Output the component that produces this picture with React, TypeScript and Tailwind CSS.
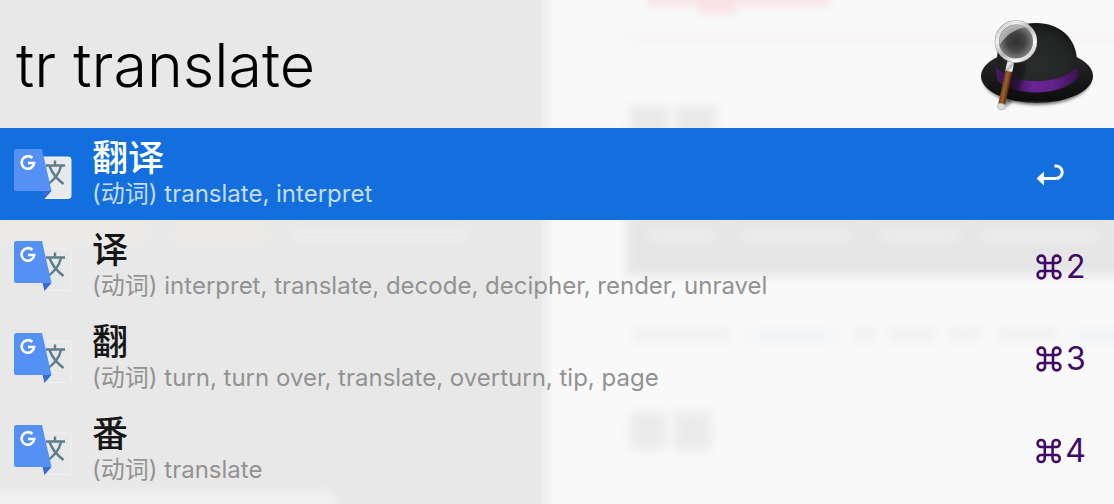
import React from "react";

type Result = { word: string; kind: string; meanings: string; shortcut: string };

const results: Result[] = [
  { word: "翻译", kind: "动词", meanings: "translate, interpret", shortcut: "" },
  { word: "译", kind: "动词", meanings: "interpret, translate, decode, decipher, render, unravel", shortcut: "2" },
  { word: "翻", kind: "动词", meanings: "turn, turn over, translate, overturn, tip, page", shortcut: "3" },
  { word: "番", kind: "动词", meanings: "translate", shortcut: "4" },
];

function TranslateIcon({ active }: { active: boolean }) {
  return (
    <svg viewBox="0 0 58 50" className="h-[50px] w-[58px] shrink-0" aria-hidden="true">
      <path d="M27 8H54.500Q57 8 57 10.500V47Q57 49.500 54.500 49.500H31Z" fill={active ? "#e8eaec" : "#e6e8ea"} stroke="#f0f1f2" strokeWidth="1" />
      <path d="M32 16.500H51M41 11.500V16.500M35.500 17C38 24 43 30 49.500 35M47 17C45.500 24 40 31 33 36" fill="none" stroke="#5f7d88" strokeWidth="2.400" />
      <path d="M28.500 42H37.500L30.500 50Z" fill="#3a6bd0" />
      <path d="M2.500 0H28L37.500 42H2.500Q0 42 0 39.500V2.500Q0 0 2.500 0Z" fill="#5590f5" />
      <path d="M18.400 9A6.300 6.300 0 1 0 20.200 14H14" fill="none" stroke="#fff" strokeWidth="2.600" />
    </svg>
  );
}

function HatIcon() {
  return (
    <svg viewBox="0 0 116 100" className="h-[100px] w-[116px] shrink-0" role="img" aria-label="Alfred">
      <defs>
        <radialGradient id="crown" cx=".5" cy=".6" r=".6">
          <stop offset="0" stopColor="#2b2d2c" />
          <stop offset=".7" stopColor="#232524" />
          <stop offset="1" stopColor="#151716" />
        </radialGradient>
        <linearGradient id="brim" x1="0" y1="0" x2="0" y2="1">
          <stop offset="0" stopColor="#292b2a" />
          <stop offset=".6" stopColor="#181918" />
          <stop offset=".95" stopColor="#0c0d0d" />
          <stop offset="1" stopColor="#333" />
        </linearGradient>
        <linearGradient id="band">
          <stop offset="0" stopColor="#4a1a69" />
          <stop offset=".18" stopColor="#35134b" />
          <stop offset=".45" stopColor="#6a2496" />
          <stop offset=".7" stopColor="#62218b" />
          <stop offset="1" stopColor="#3c1355" />
        </linearGradient>
        <radialGradient id="lens">
          <stop offset="0" stopColor="#303030" />
          <stop offset=".5" stopColor="#444" />
          <stop offset="1" stopColor="#888" />
        </radialGradient>
        <linearGradient id="rim" x1="0" y1="0" x2="1" y2="1">
          <stop offset="0" stopColor="#b8b8b8" />
          <stop offset=".25" stopColor="#f2f2f2" />
          <stop offset=".5" stopColor="#b5b5b5" />
          <stop offset=".75" stopColor="#fafafa" />
          <stop offset="1" stopColor="#aaa" />
        </linearGradient>
        <linearGradient id="wood">
          <stop offset="0" stopColor="#6b3d1b" />
          <stop offset=".45" stopColor="#a0622c" />
          <stop offset="1" stopColor="#53290e" />
        </linearGradient>
        <filter id="soft"><feGaussianBlur stdDeviation="1.500" /></filter>
      </defs>
      <ellipse cx="57" cy="65" rx="54" ry="26" fill="#777" filter="url(#soft)" />
      <ellipse cx="57" cy="62" rx="56" ry="27" fill="url(#brim)" />
      <path d="M17 66V44C18 22 34 9 56 9C80 9 96 24 97 46V66C80 82 35 82 17 66Z" fill="url(#crown)" />
      <path d="M16 53C34 72 80 72 97 53L98 63C82 83 34 83 17 66Z" fill="url(#band)" />
      <path d="M44 48C47 58 40 75 32 88L24 94L31 48Z" fill="#0b0b0b" opacity=".5" filter="url(#soft)" />
      <g transform="rotate(12 35 28)">
        <rect x="31.500" y="48" width="7" height="12" rx="1" fill="url(#rim)" />
        <rect x="31.500" y="58" width="7" height="34" fill="url(#wood)" />
        <rect x="31.500" y="91" width="7" height="6" rx="2" fill="#dcdcdc" stroke="#a5a5a5" strokeWidth=".6" />
      </g>
      <circle cx="36" cy="27.500" r="18.500" fill="url(#lens)" />
      <path d="M18 24C21 11 36 8 47 13C37 14 26 20 19 32Z" fill="#e0e0e0" opacity=".6" />
      <circle cx="36" cy="27.500" r="19" fill="none" stroke="#7b7b7b" strokeWidth="4.600" />
      <circle cx="36" cy="27.500" r="19" fill="none" stroke="url(#rim)" strokeWidth="3.800" />
    </svg>
  );
}

function ReturnIcon() {
  return (
    <svg viewBox="0 0 28 22" className="h-[22px] w-7" role="img" aria-label="Return">
      <path d="M0.500 14.500L8 7.500V21.500Z" fill="#fff" />
      <path d="M7 14.500H20A6.250 6.250 0 0 0 20 2H18.500" fill="none" stroke="#fff" strokeWidth="3" />
    </svg>
  );
}

function CommandIcon() {
  return (
    <svg viewBox="0 0 26 26" className="size-[26px]" role="img" aria-label="Command">
      <path d="M9 9H17V17H9ZM9 9H5.300A3.700 3.700 0 1 1 9 5.300ZM17 9V5.300A3.700 3.700 0 1 1 20.700 9ZM17 17H20.700A3.700 3.700 0 1 1 17 20.700ZM9 17V20.700A3.700 3.700 0 1 1 5.300 17Z" fill="none" stroke="#420866" strokeWidth="2.600" />
    </svg>
  );
}

function Backdrop() {
  return (
    <svg aria-hidden="true" className="absolute inset-0 -z-10 size-full bg-[#f9f9f9]">
      <defs>
        <filter id="haze" x="-50%" y="-50%" width="200%" height="200%" colorInterpolationFilters="sRGB"><feGaussianBlur stdDeviation="5" /></filter>
        <filter id="mist" x="-50%" y="-200%" width="200%" height="500%" colorInterpolationFilters="sRGB"><feGaussianBlur stdDeviation="4" /></filter>
        <linearGradient id="edge">
          <stop offset="0" stopColor="#e8e8e8" />
          <stop offset="1" stopColor="#f9f9f9" />
        </linearGradient>
      </defs>
      <rect width="540" height="100%" fill="#e8e8e8" />
      <rect x="539" width="15" height="100%" fill="url(#edge)" />
      <g filter="url(#haze)">
        <path d="M0 224H150V246H0ZM172 224H268V246H172Z" fill="#eceae7" />
        <path d="M290 226H470V244H290Z" fill="#ebebeb" />
        <path d="M630 106H668V136H630ZM676 106H716V136H676Z" fill="#e9e9e9" />
        <path d="M626 200H1130V276H626Z" fill="#e6e6e6" />
        <path d="M630 412H666V450H630ZM674 412H712V450H674Z" fill="#ebebeb" />
        <path d="M-10 490H335V520H-10Z" fill="#f0f0f0" />
      </g>
      <g filter="url(#mist)">
        <path d="M648 -6H828V6H648ZM700 5H735V14H700Z" fill="#f8e2e2" />
        <path d="M626 33H1130V43H626Z" fill="#f7f4f3" />
        <path d="M648 229H716V242H648ZM742 229H850V242H742ZM880 229H960V242H880ZM980 229H1100V242H980Z" fill="#ebebeb" />
        <path d="M632 326H732V342H632ZM852 326H876V342H852ZM888 326H936V342H888ZM948 326H982V342H948ZM996 326H1058V342H996Z" fill="#f2f2f2" />
        <path d="M748 328H836V344H748ZM1068 328H1130V344H1068Z" fill="#f2f5f9" />
      </g>
    </svg>
  );
}

export default function App() {
  return (
    <main className="relative isolate min-h-screen overflow-hidden font-['Inter','Noto_Sans_CJK_SC',sans-serif]">
      <Backdrop />
      <header className="flex h-32 items-center justify-between pr-[18px] pl-4">
        <input
          type="text"
          aria-label="Search"
          defaultValue="tr translate"
          className="min-w-0 flex-1 bg-transparent pt-1 text-[61px] font-[350] text-black outline-none"
        />
        <HatIcon />
      </header>
      <ul>
        {results.map((r, i) => {
          const active = i === 0;
          return (
            <li key={r.word}>
              <button
                type="button"
                className={`flex h-[92px] w-full items-center pr-7 pl-3.5 text-left ${active ? "bg-[#126fdd] text-white" : "text-[#161616]"}`}
              >
                <TranslateIcon active={active} />
                <span className="ml-5 flex flex-1 flex-col">
                  <span className="text-[36px] leading-10 font-medium">{r.word}</span>
                  <span className={`text-[24px] leading-8 ${active ? "text-[#c6dcf6]" : "text-[#929292]"}`}>
                    ({r.kind}) {r.meanings}
                  </span>
                </span>
                <span className="flex w-[50px] items-center gap-1 pt-0.5 text-[32px] leading-10 text-[#420866]">
                  {active ? <ReturnIcon /> : <><CommandIcon />{r.shortcut}</>}
                </span>
              </button>
            </li>
          );
        })}
      </ul>
    </main>
  );
}
